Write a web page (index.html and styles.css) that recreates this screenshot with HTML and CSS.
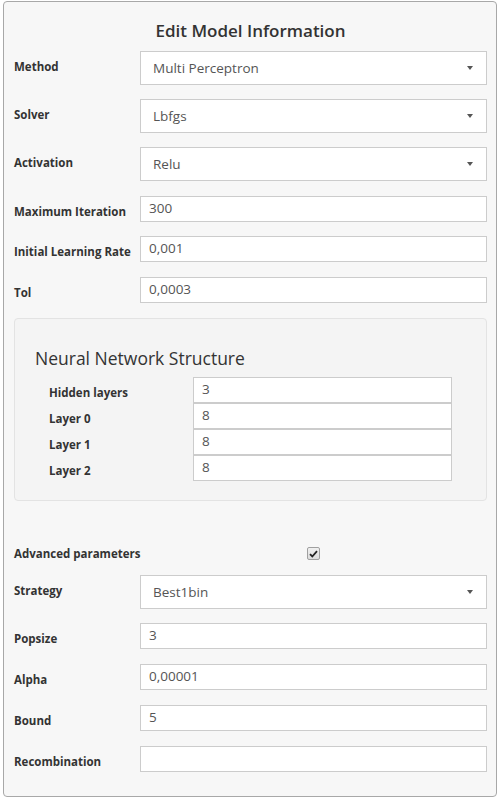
FILE: index.html
```html
<!DOCTYPE html>
<html>
<head>
<meta charset="utf-8">
<link rel="stylesheet" href="styles.css">
</head>
<body>
<div class="panel">
  <h3 class="title">Edit Model Information</h3>

  <div class="row row-select">
    <label class="lbl">Method</label>
    <div class="select"><span>Multi Perceptron</span><i class="caret"></i></div>
  </div>
  <div class="row row-select">
    <label class="lbl">Solver</label>
    <div class="select"><span>Lbfgs</span><i class="caret"></i></div>
  </div>
  <div class="row row-select last-select">
    <label class="lbl">Activation</label>
    <div class="select"><span>Relu</span><i class="caret"></i></div>
  </div>
  <div class="row tight">
    <label class="lbl">Maximum Iteration</label>
    <div class="input">300</div>
  </div>
  <div class="row">
    <label class="lbl">Initial Learning Rate</label>
    <div class="input">0,001</div>
  </div>
  <div class="row">
    <label class="lbl">Tol</label>
    <div class="input">0,0003</div>
  </div>

  <div class="well">
    <h4 class="well-title">Neural Network Structure</h4>
    <div class="layers">
      <div class="lrow"><label class="lbl2">Hidden layers</label><div class="input">3</div></div>
      <div class="lrow"><label class="lbl2">Layer 0</label><div class="input">8</div></div>
      <div class="lrow"><label class="lbl2">Layer 1</label><div class="input">8</div></div>
      <div class="lrow"><label class="lbl2">Layer 2</label><div class="input">8</div></div>
    </div>
  </div>

  <div class="row adv">
    <label class="lbl adv-lbl">Advanced parameters</label>
    <span class="check"><svg width="9" height="8" viewBox="0 0 9 8"><path d="M1 4.2 L3.3 6.5 L8 1.2" fill="none" stroke="#222" stroke-width="1.8"/></svg></span>
  </div>

  <div class="row row-select">
    <label class="lbl">Strategy</label>
    <div class="select"><span>Best1bin</span><i class="caret"></i></div>
  </div>
  <div class="row">
    <label class="lbl">Popsize</label>
    <div class="input">3</div>
  </div>
  <div class="row">
    <label class="lbl">Alpha</label>
    <div class="input">0,00001</div>
  </div>
  <div class="row">
    <label class="lbl">Bound</label>
    <div class="input">5</div>
  </div>
  <div class="row">
    <label class="lbl">Recombination</label>
    <div class="input"></div>
  </div>
</div>
</body>
</html>
```

FILE: styles.css
```css
* { box-sizing: border-box; }
html, body { margin: 0; padding: 0; background: #fff; }
body {
  font-family: "Open Sans", "Noto Sans", sans-serif;
  color: #333;
}
.panel {
  margin: 1px 0 0 3px;
  width: 494px;
  height: 796px;
  border: 1px solid #a8a8a8;
  border-radius: 4px;
  background: #f7f7f7;
  padding: 0 9px 0 10px;
}
.title {
  margin: 0;
  padding-top: 18px;
  height: 49px;
  text-align: center;
  font-size: 17px;
  font-weight: 600;
  line-height: 22px;
  color: #333;
}
.row {
  display: flex;
  align-items: flex-start;
  margin-bottom: 15px;
}
.row-select { margin-bottom: 14px; }
.last-select { margin-bottom: 15px; }
.tight { margin-bottom: 14px; }
.lbl {
  width: 126px;
  flex: none;
  font-size: 11.5px;
  font-weight: 700;
  line-height: 16px;
  padding-top: 8px;
  color: #333;
}
.select {
  flex: 1;
  height: 34px;
  border: 1px solid #ccc;
  background: #fff;
  display: flex;
  align-items: center;
  padding: 0 12px;
  font-size: 13.5px;
  color: #555;
}
.select span { flex: 1; }
.caret {
  width: 0; height: 0;
  border-left: 3.5px solid transparent;
  border-right: 3.5px solid transparent;
  border-top: 4px solid #555;
  margin-right: 1px;
}
.input {
  flex: 1;
  height: 26px;
  border: 1px solid #ccc;
  background: #fff;
  padding: 0 8px;
  font-size: 13.5px;
  line-height: 22px;
  color: #555;
}
.well {
  height: 183px;
  margin-bottom: 46px;
  border: 1px solid #e3e3e3;
  border-radius: 4px;
  background: #f4f4f4;
  padding: 27px 34px 0 20px;
}
.well-title {
  margin: 0 0 7px 0;
  font-size: 17.5px;
  font-weight: 500;
  line-height: 24px;
  color: #333;
}
.layers { padding-left: 14px; }
.lrow {
  display: flex;
  align-items: flex-start;
}
.lbl2 {
  width: 144px;
  flex: none;
  font-size: 11.5px;
  font-weight: 700;
  line-height: 16px;
  padding-top: 8px;
}
.adv { margin-bottom: 15px; align-items: center; height: 13px; }
.adv-lbl { width: 293px; padding-top: 0; }
.check {
  width: 13px; height: 13px;
  border: 1px solid #a0a0a0;
  border-radius: 2px;
  background: linear-gradient(#f0f0f0, #dcdcdc);
  display: flex;
  align-items: center;
  justify-content: center;
}
```
